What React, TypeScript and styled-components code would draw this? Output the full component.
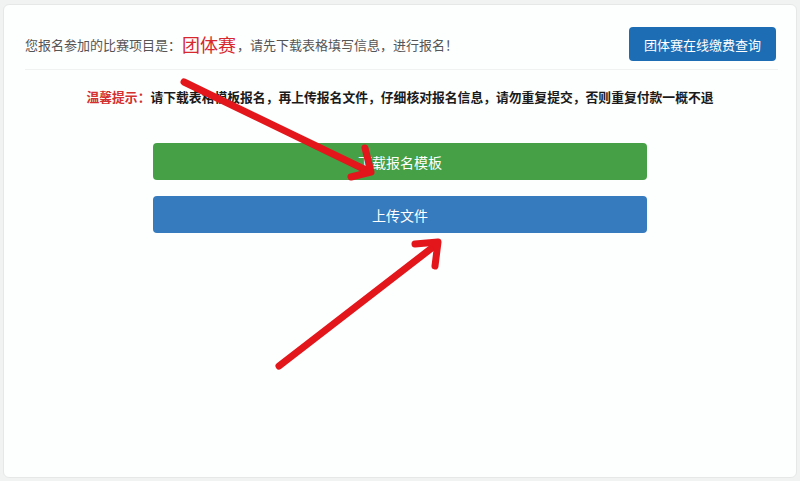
import React from 'react'
import styled, { createGlobalStyle } from 'styled-components'

const GlobalStyle = createGlobalStyle`
    html, body {
        margin: 0;
        padding: 0;
        background: #f1f2f2;
        font-family: "Noto Sans CJK SC", "Noto Sans", sans-serif;
    }
`

const Page = styled.div`
    position: relative;
    box-sizing: border-box;
    width: 800px;
    height: 481px;
    padding: 4px 3px 3px 3px;
`

const Card = styled.div`
    box-sizing: border-box;
    height: 100%;
    background: #fdfefe;
    border: 1px solid #e6e8e8;
    border-radius: 6px;
`

const Header = styled.div`
    display: flex;
    align-items: center;
    justify-content: space-between;
    padding: 22px 20px 8px 21px;
`

const Intro = styled.p`
    margin: 0;
    font-size: 13px;
    color: #555555;
    display: flex;
    align-items: center;
`

const Event = styled.span`
    font-size: 18px;
    color: #d8282d;
    margin: 0 1px 0 1px;
`

const QueryButton = styled.a`
    display: inline-flex;
    align-items: center;
    justify-content: center;
    box-sizing: border-box;
    width: 147px;
    height: 34px;
    border-radius: 4px;
    background: #1c6db4;
    color: #ffffff;
    font-size: 13px;
    text-decoration: none;
`

const Divider = styled.hr`
    margin: 0 18px 0 21px;
    border: none;
    border-top: 1px solid #f0f1f1;
`

const Notice = styled.p`
    margin: 17px 0 0;
    text-align: center;
    font-size: 12.8px;
    font-weight: 700;
    color: #1a1a1a;
`

const NoticeLabel = styled.span`
    color: #d3302f;
`

const Actions = styled.div`
    display: flex;
    flex-direction: column;
    gap: 16px;
    width: 494px;
    margin: 37px auto 0;
`

const ActionButton = styled.button<{ $tone: 'green' | 'blue' }>`
    height: 37px;
    border: none;
    border-radius: 4px;
    background: ${p => (p.$tone === 'green' ? '#46a045' : '#357bbd')};
    color: #ffffff;
    font-family: inherit;
    font-size: 14px;
    cursor: pointer;
`

const Annotations = styled.svg`
    position: absolute;
    left: 0;
    top: 0;
    pointer-events: none;
`

const Arrow: React.FC<{ d: string }> = ({ d }) => (
    <path d={d} fill="none" stroke="#e3161b" strokeWidth={7} strokeLinecap="round" strokeLinejoin="round" />
)

const App: React.FC = () => {
    return (
        <Page>
            <GlobalStyle />
            <Card>
                <Header>
                    <Intro>
                        您报名参加的比赛项目是：<Event>团体赛</Event>，请先下载表格填写信息，进行报名！
                    </Intro>
                    <QueryButton href="#">团体赛在线缴费查询</QueryButton>
                </Header>
                <Divider />
                <Notice>
                    <NoticeLabel>温馨提示：</NoticeLabel>
                    请下载表格模板报名，再上传报名文件，仔细核对报名信息，请勿重复提交，否则重复付款一概不退
                </Notice>
                <Actions>
                    <ActionButton $tone="green">下载报名模板</ActionButton>
                    <ActionButton $tone="blue">上传文件</ActionButton>
                </Actions>
            </Card>
            <Annotations width={800} height={481} viewBox="0 0 800 481">
                <Arrow d="M184 82 L368 171" />
                <Arrow d="M365 148 L371 172 L351 177" />
                <Arrow d="M279 366 L437 244" />
                <Arrow d="M415 244 L438 242 L435 266" />
            </Annotations>
        </Page>
    )
}

export default App
